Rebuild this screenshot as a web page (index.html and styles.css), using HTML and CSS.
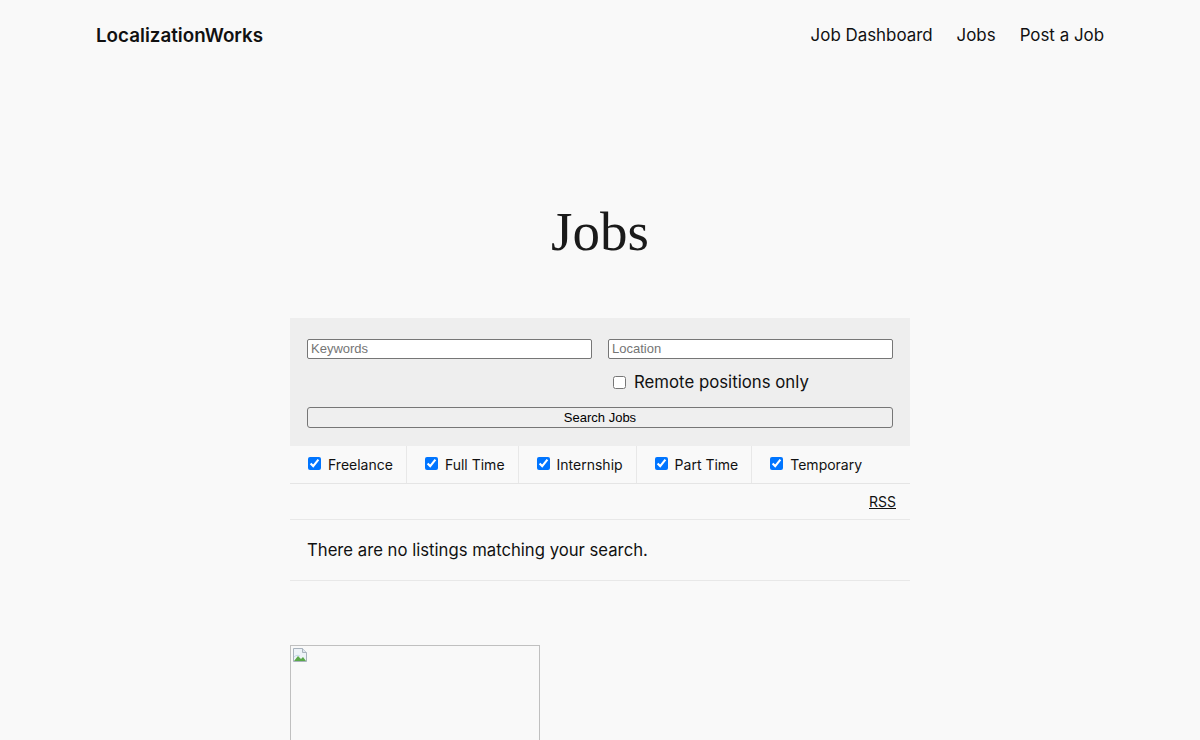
FILE: index.html
```html
<!DOCTYPE html>
<html lang="en">
<head>
<meta charset="utf-8">
<title>Jobs – LocalizationWorks</title>
<link rel="stylesheet" href="styles.css">
</head>
<body>
<header class="site-header">
  <a class="logo" href="#">LocalizationWorks</a>
  <nav class="nav">
    <a href="#">Job Dashboard</a>
    <a href="#">Jobs</a>
    <a href="#">Post a Job</a>
  </nav>
</header>
<main class="main">
  <h1 class="title">Jobs</h1>
  <div class="jobs">
    <form class="search">
      <div class="fields">
        <div class="col">
          <input class="text" type="text" placeholder="Keywords">
        </div>
        <div class="col">
          <input class="text" type="text" placeholder="Location">
          <label class="remote"><input type="checkbox"> Remote positions only</label>
        </div>
      </div>
      <button class="submit" type="button">Search Jobs</button>
    </form>
    <ul class="types">
      <li><label><input type="checkbox" checked> Freelance</label></li>
      <li><label><input type="checkbox" checked> Full Time</label></li>
      <li><label><input type="checkbox" checked> Internship</label></li>
      <li><label><input type="checkbox" checked> Part Time</label></li>
      <li><label><input type="checkbox" checked> Temporary</label></li>
    </ul>
    <div class="rss"><a href="#">RSS</a></div>
    <div class="empty">There are no listings matching your search.</div>
  </div>
  <div class="broken">
    <svg width="16" height="16" viewBox="0 0 16 16">
      <path d="M1.5 1.5h9l4 4v9h-13z" fill="#eef3f8" stroke="#a9b3bd"/>
      <path d="M10.5 1.5v4h4" fill="#dde6ee" stroke="#a9b3bd"/>
      <path d="M2 14l4-5 3 3 2-2 3 4z" fill="#5aa84a"/>
      <path d="M2 10c2-2 4-2 6-1" stroke="#c5d9ec" fill="none"/>
    </svg>
  </div>
</main>
</body>
</html>
```
FILE: styles.css
```css
* { box-sizing: border-box; }
html, body { margin: 0; padding: 0; }
body {
  background: #f9f9f9;
  color: #111;
  font-family: Inter, "Liberation Sans", sans-serif;
}
a { color: #111; text-decoration: none; }

.site-header {
  display: flex;
  justify-content: space-between;
  align-items: center;
  height: 70px;
  padding: 0 96px;
}
.logo {
  font-size: 18.8px;
  font-weight: 600;
}
.nav { display: flex; gap: 24px; }
.nav a { font-size: 16.9px; }

.main {
  width: 620px;
  margin: 0 auto;
}
.title {
  margin: 128px 0 52px;
  text-align: center;
  font-family: "Liberation Serif", "DejaVu Serif", serif;
  font-weight: 400;
  font-size: 55px;
  line-height: 68px;
  color: #1a1a1a;
}

.search {
  background: #eeeeee;
  padding: 21px 17px 18px;
}
.fields {
  display: grid;
  grid-template-columns: 1fr 1fr;
  gap: 16px;
}
.col { display: flex; flex-direction: column; }
.text {
  height: 20px;
  width: 100%;
  margin: 0;
  padding: 0 3px 1px;
  border: 1px solid #767676;
  border-radius: 2px;
  background: #fff;
  font-family: "Liberation Sans", Arial, sans-serif;
  font-size: 13px;
}
.text::placeholder { color: #757575; }
.remote {
  display: flex;
  align-items: center;
  gap: 5px;
  margin-top: 10px;
  padding-left: 1px;
  font-size: 16.8px;
  line-height: 26px;
}
.remote input { margin: 0 3px 0 4px; width: 13px; height: 13px; }
.submit {
  display: block;
  width: 100%;
  height: 21px;
  margin-top: 12px;
  padding: 0;
  border: 1px solid #767676;
  border-radius: 3px;
  background: #efefef;
  color: #000;
  font-family: "Liberation Sans", Arial, sans-serif;
  font-size: 13px;
}

.types {
  display: flex;
  list-style: none;
  margin: 0;
  padding: 0;
  border-bottom: 1px solid #e5e5e5;
}
.types li {
  padding: 0 13px 0 18px;
  border-right: 1px solid #e8e8e8;
  height: 37px;
  display: flex;
  align-items: center;
  font-size: 14px;
}
.types li:last-child { border-right: 0; }
.types label { display: flex; align-items: center; gap: 7px; }
.types input { margin: 0; width: 13px; height: 13px; position: relative; top: -1px; }

.rss {
  display: flex;
  justify-content: flex-end;
  align-items: center;
  height: 36px;
  padding: 0 14px;
  border-bottom: 1px solid #e8e8e8;
  font-size: 14px;
}
.rss a { text-decoration: underline; }

.empty {
  height: 61px;
  display: flex;
  align-items: center;
  padding: 0 17px;
  font-size: 16.7px;
  border-bottom: 1px solid #e8e8e8;
}

.broken {
  margin-top: 64px;
  width: 250px;
  height: 120px;
  border: 1px solid #c0c0c0;
  padding: 1px;
}
.broken svg { display: block; }
```
